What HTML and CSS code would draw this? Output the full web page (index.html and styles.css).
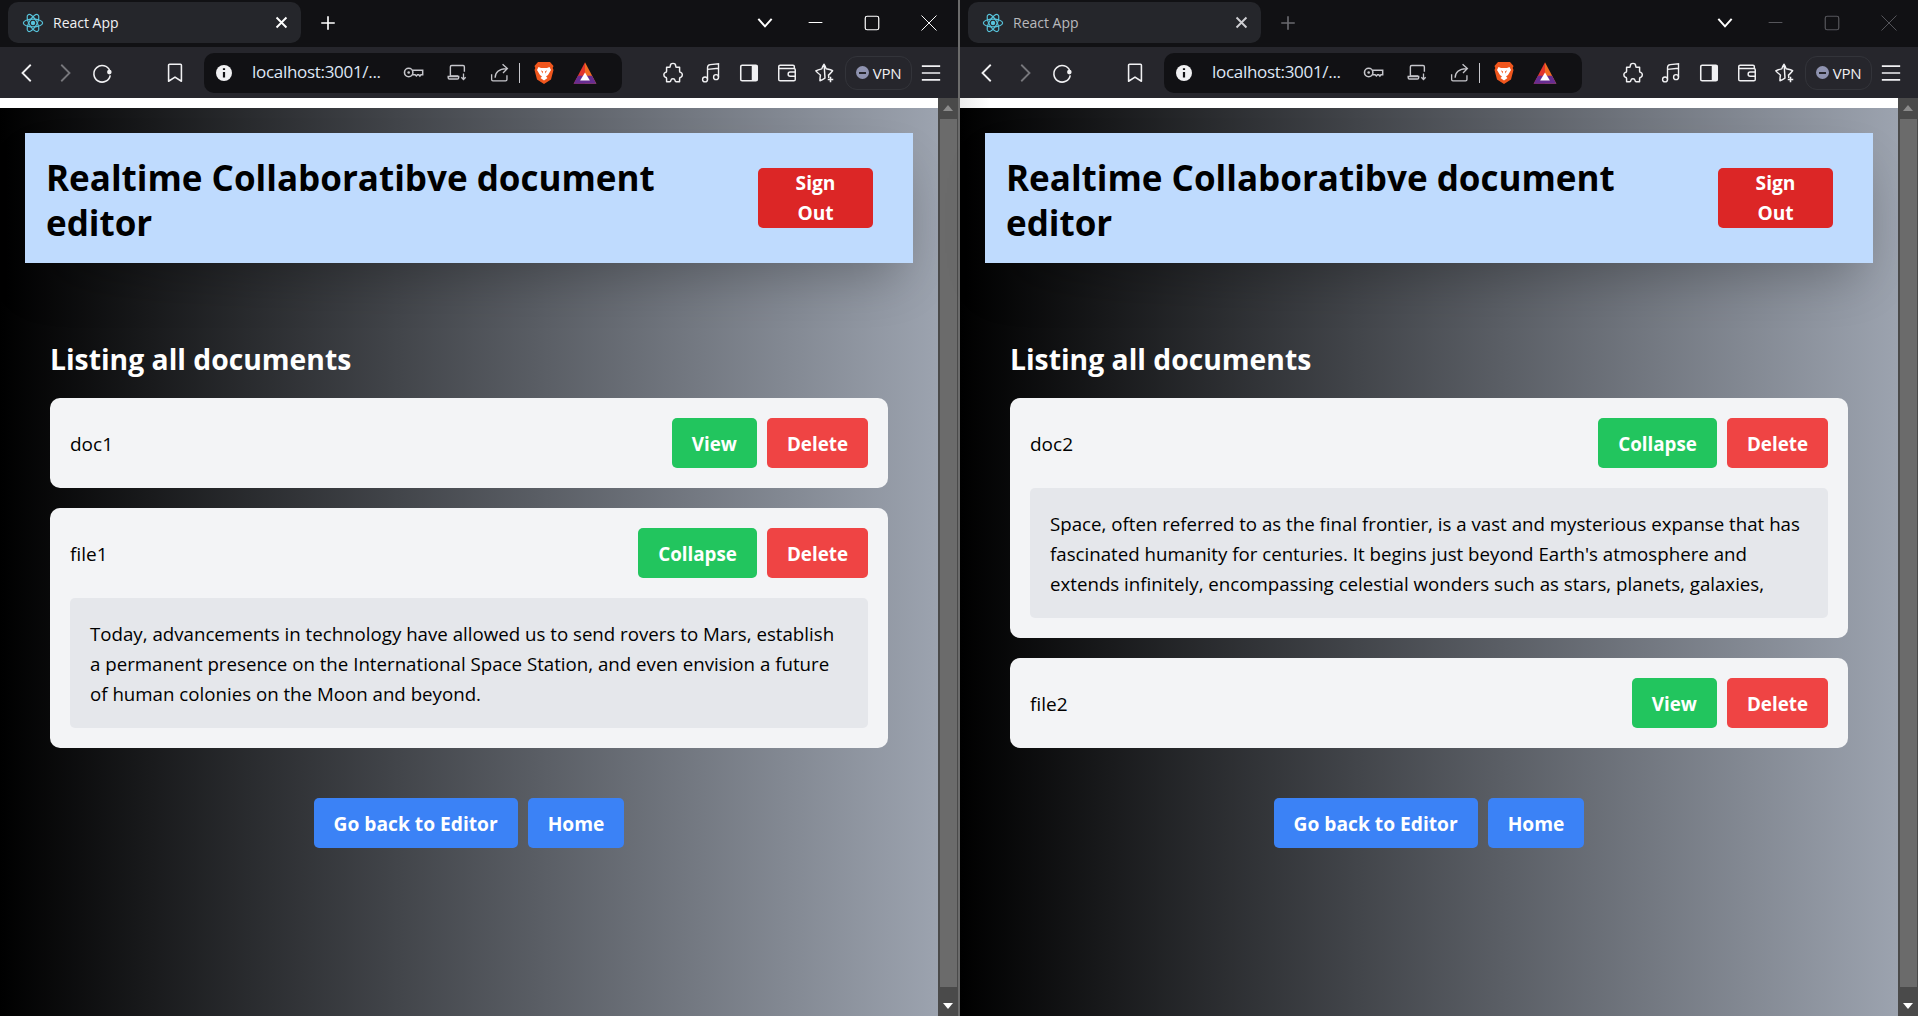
FILE: index.html
```html
<!DOCTYPE html>
<html lang="en">
<head>
  <meta charset="UTF-8" />
  <title>React App</title>
  <link rel="stylesheet" href="styles.css">
</head>
<body>
  <!-- Shared browser icons -->
  <svg class="sprite" xmlns="http://www.w3.org/2000/svg">
    <symbol id="i-react" viewBox="0 0 24 24">
      <circle cx="12" cy="12" r="2.4" fill="#58c4dc"/>
      <g fill="none" stroke="#58c4dc" stroke-width="1.3">
        <ellipse cx="12" cy="12" rx="10.5" ry="4.2"/>
        <ellipse cx="12" cy="12" rx="10.5" ry="4.2" transform="rotate(60 12 12)"/>
        <ellipse cx="12" cy="12" rx="10.5" ry="4.2" transform="rotate(120 12 12)"/>
      </g>
    </symbol>
    <symbol id="i-back" viewBox="0 0 24 24"><path d="M15 3 6 12l9 9" fill="none" stroke="currentColor" stroke-width="2"/></symbol>
    <symbol id="i-forward" viewBox="0 0 24 24"><path d="m9 3 9 9-9 9" fill="none" stroke="currentColor" stroke-width="2"/></symbol>
    <symbol id="i-reload" viewBox="0 0 24 24">
      <path d="M20.500 9.500A9 9 0 1 0 21 14.500" fill="none" stroke="currentColor" stroke-width="1.700"/>
      <circle cx="20" cy="11" r="2.500" fill="currentColor"/>
    </symbol>
    <symbol id="i-bookmark" viewBox="0 0 24 24"><path d="M6 2.500h12a1 1 0 0 1 1 1V21l-7-4.500L5 21V3.500a1 1 0 0 1 1-1z" fill="none" stroke="currentColor" stroke-width="1.700" stroke-linejoin="round"/></symbol>
    <symbol id="i-info" viewBox="0 0 24 24">
      <circle cx="12" cy="12" r="8" fill="currentColor"/>
      <path d="M12 11v5.500M12 7.200v1.800" stroke="#111114" stroke-width="2.200"/>
    </symbol>
    <symbol id="i-key" viewBox="0 0 24 24">
      <circle cx="6.500" cy="12" r="4.800" fill="none" stroke="currentColor" stroke-width="1.800"/>
      <circle cx="6.500" cy="12" r="1.500" fill="currentColor"/>
      <path d="M11 9.500h11.500v5h-2l-1.200 1.500-1.300-1.500h-1.500l-1.200 1.500-1.500-1.500H11" fill="none" stroke="currentColor" stroke-width="1.700"/>
    </symbol>
    <symbol id="i-laptop" viewBox="0 0 24 24">
      <path d="M14 16H5V5.500a1.500 1.500 0 0 1 1.500-1.500h13A1.500 1.500 0 0 1 21 5.500V11" fill="none" stroke="currentColor" stroke-width="1.600"/>
      <path d="M2.500 16.500h12v1.500a1.500 1.500 0 0 1-1.500 1.500H4a1.500 1.500 0 0 1-1.500-1.500z" fill="none" stroke="currentColor" stroke-width="1.600"/>
      <path d="M20 13v7m-2.500-2.500L20 20l2.500-2.500" fill="none" stroke="currentColor" stroke-width="1.500"/>
    </symbol>
    <symbol id="i-share" viewBox="0 0 24 24">
      <path d="M20.500 15v5a1.500 1.500 0 0 1-1.500 1.500H4.500A1.500 1.500 0 0 1 3 20v-6" fill="none" stroke="currentColor" stroke-width="1.500"/>
      <path d="M7 18c0-6 3.500-10 13-10.500M15.500 2.500l5.500 5-5 5" fill="none" stroke="currentColor" stroke-width="1.500"/>
    </symbol>
    <symbol id="i-brave" viewBox="0 0 24 24">
      <path d="M6 1.500h12l3.500 4-.8 2 .8 2-2.500 9.500L12 23.500 5 19 2.500 9.500l.8-2-.8-2z" fill="#f0561d"/>
      <path d="M6.500 6.500 9 7.500h6l2.500-1 1.500 3-3 5-2 1.500 1.500 1.500-3.500 2.500-3.500-2.500 1.500-1.500-2-1.500-3-5z" fill="#fff"/>
      <path d="M9 9.800l2 1.200-.5 2zM15 9.800l-2 1.200.5 2z" fill="#f0561d"/>
    </symbol>
    <symbol id="i-bat" viewBox="0 0 24 24">
      <path d="M12 2 1.500 22H12z" fill="#e2352d"/>
      <path d="M12 2 22.500 22H12z" fill="#f26b21"/>
      <path d="M1.500 22h21l-4-7.500h-13z" fill="#662d91"/>
      <path d="M12 11.500 7.500 19h9z" fill="#fff"/>
    </symbol>
    <symbol id="i-puzzle" viewBox="0 0 24 24"><path d="M9 4.500a3 3 0 0 1 6 0c0 1 .5 1.300 1.200 1.300h3V10c0 .8.500 1.300 1.300 1.300a3 3 0 0 1 0 5.400c-.8 0-1.300.5-1.300 1.300v3.500H15.500c-.8 0-1.200-.5-1.200-1.200a2.400 2.400 0 0 0-4.700 0c0 .7-.4 1.200-1.200 1.200H5V18c0-.8-.5-1.300-1.300-1.300a3 3 0 0 1 0-5.400c.8 0 1.300-.5 1.300-1.300V5.800h2.800C8.500 5.800 9 5.500 9 4.500z" fill="none" stroke="currentColor" stroke-width="1.600" stroke-linejoin="round"/></symbol>
    <symbol id="i-music" viewBox="0 0 24 24">
      <circle cx="5.500" cy="19" r="2.700" fill="none" stroke="currentColor" stroke-width="1.500"/>
      <circle cx="17.500" cy="16.500" r="2.700" fill="none" stroke="currentColor" stroke-width="1.500"/>
      <path d="M8.200 19V6c0-2 1-3 3-3.200l9-.8v14.500M8.200 8l12-1.200" fill="none" stroke="currentColor" stroke-width="1.500"/>
    </symbol>
    <symbol id="i-sidebar" viewBox="0 0 24 24">
      <rect x="3" y="3.500" width="18" height="17" rx="1.500" fill="none" stroke="currentColor" stroke-width="1.700"/>
      <rect x="15" y="3.500" width="6" height="17" fill="currentColor"/>
    </symbol>
    <symbol id="i-wallet" viewBox="0 0 24 24">
      <path d="M20 7V5a1.500 1.500 0 0 0-1.500-1.500h-14A1.500 1.500 0 0 0 3 5v14a1.500 1.500 0 0 0 1.500 1.500h15A1.500 1.500 0 0 0 21 19V8.500A1.500 1.500 0 0 0 19.500 7H3.500" fill="none" stroke="currentColor" stroke-width="1.600"/>
      <path d="M21 11h-5.500a2 2 0 0 0 0 4.500H21" fill="none" stroke="currentColor" stroke-width="1.600"/>
    </symbol>
    <symbol id="i-spark" viewBox="0 0 24 24">
      <path d="M11 2.500c1 1.500 1.800 3.300 2.300 5 1.800.4 5 .9 7 2-1.500 2-3 3.500-4.500 4.800.3 1.200.3 2 .2 3.200M12 17.500c-1.700 1.200-3.500 2.200-5.500 3 0-2.400.2-4.500.5-6.300C5.300 13 3.500 11.500 2 9.700c2-1.100 4.300-1.700 6.500-2.200.6-1.800 1.400-3.500 2.500-5z" fill="none" stroke="currentColor" stroke-width="1.600" stroke-linejoin="round"/>
      <path d="M18 16v6m-3-3h6" stroke="currentColor" stroke-width="1.700"/>
    </symbol>
    <symbol id="i-menu" viewBox="0 0 24 24"><path d="M2 4.500h20M2 12h20M2 19.500h20" stroke="currentColor" stroke-width="1.700"/></symbol>
    <symbol id="i-close" viewBox="0 0 24 24"><path d="m5 5 14 14M19 5 5 19" stroke="currentColor" stroke-width="2.700"/></symbol>
    <symbol id="i-plus" viewBox="0 0 24 24"><path d="M12 3v18M3 12h18" stroke="currentColor" stroke-width="2.200"/></symbol>
    <symbol id="i-chevron" viewBox="0 0 24 24"><path d="m4 7 8 9 8-9" fill="none" stroke="currentColor" stroke-width="2.400"/></symbol>
    <symbol id="i-min" viewBox="0 0 24 24"><path d="M1 12h22" stroke="currentColor" stroke-width="1.600"/></symbol>
    <symbol id="i-max" viewBox="0 0 24 24"><rect x="3" y="3" width="18" height="18" rx="2.500" fill="none" stroke="currentColor" stroke-width="1.600"/></symbol>
    <symbol id="i-x" viewBox="0 0 24 24"><path d="m2 2 20 20M22 2 2 22" stroke="currentColor" stroke-width="1.300"/></symbol>
  </svg>

  <div class="desktop">
    <!-- Left browser window -->
    <div class="window">
      <div class="tabstrip">
        <div class="tab">
          <svg class="tab-icon"><use href="#i-react"/></svg>
          <span class="tab-title">React App</span>
          <svg class="tab-close"><use href="#i-close"/></svg>
        </div>
        <svg class="new-tab"><use href="#i-plus"/></svg>
        <svg class="tab-list"><use href="#i-chevron"/></svg>
        <svg class="win-min"><use href="#i-min"/></svg>
        <svg class="win-max"><use href="#i-max"/></svg>
        <svg class="win-x"><use href="#i-x"/></svg>
      </div>
      <div class="toolbar">
        <svg class="tool nav-back"><use href="#i-back"/></svg>
        <svg class="tool nav-forward"><use href="#i-forward"/></svg>
        <svg class="tool nav-reload"><use href="#i-reload"/></svg>
        <svg class="tool nav-mark"><use href="#i-bookmark"/></svg>
        <div class="urlbar">
          <svg class="url-info"><use href="#i-info"/></svg>
          <span class="url-text">localhost:3001/...</span>
          <svg class="url-icon"><use href="#i-key"/></svg>
          <svg class="url-icon"><use href="#i-laptop"/></svg>
          <svg class="url-icon"><use href="#i-share"/></svg>
          <span class="url-sep"></span>
          <svg class="url-brave"><use href="#i-brave"/></svg>
          <svg class="url-bat"><use href="#i-bat"/></svg>
        </div>
        <div class="tool-right">
          <svg class="tool"><use href="#i-puzzle"/></svg>
          <svg class="tool"><use href="#i-music"/></svg>
          <svg class="tool"><use href="#i-sidebar"/></svg>
          <svg class="tool"><use href="#i-wallet"/></svg>
          <svg class="tool"><use href="#i-spark"/></svg>
          <div class="vpn"><span class="vpn-dot"></span>VPN</div>
          <svg class="tool"><use href="#i-menu"/></svg>
        </div>
      </div>
      <div class="viewport">
        <div class="page">
          <div class="app">
            <header class="site-header">
              <h1>Realtime Collaboratibve document editor</h1>
              <button class="btn btn-signout">Sign Out</button>
            </header>
            <main class="docs">
              <h2>Listing all documents</h2>
              <div class="doc-card">
                <div class="doc-row">
                  <span class="doc-name">doc1</span>
                  <div class="doc-actions">
                    <button class="btn btn-green">View</button>
                    <button class="btn btn-red">Delete</button>
                  </div>
                </div>
              </div>
              <div class="doc-card">
                <div class="doc-row">
                  <span class="doc-name">file1</span>
                  <div class="doc-actions">
                    <button class="btn btn-green">Collapse</button>
                    <button class="btn btn-red">Delete</button>
                  </div>
                </div>
                <div class="doc-body">Today, advancements in technology have allowed us to send rovers to Mars, establish a permanent presence on the International Space Station, and even envision a future of human colonies on the Moon and beyond.</div>
              </div>
              <div class="bottom-links">
                <button class="btn btn-blue">Go back to Editor</button>
                <button class="btn btn-blue">Home</button>
              </div>
            </main>
          </div>
        </div>
        <div class="scrollbar">
          <div class="arrow-up"></div>
          <div class="thumb"></div>
          <div class="arrow-down"></div>
        </div>
      </div>
    </div>

    <!-- Right browser window (not focused) -->
    <div class="window window-blur">
      <div class="tabstrip">
        <div class="tab">
          <svg class="tab-icon"><use href="#i-react"/></svg>
          <span class="tab-title">React App</span>
          <svg class="tab-close"><use href="#i-close"/></svg>
        </div>
        <svg class="new-tab"><use href="#i-plus"/></svg>
        <svg class="tab-list"><use href="#i-chevron"/></svg>
        <svg class="win-min"><use href="#i-min"/></svg>
        <svg class="win-max"><use href="#i-max"/></svg>
        <svg class="win-x"><use href="#i-x"/></svg>
      </div>
      <div class="toolbar">
        <svg class="tool nav-back"><use href="#i-back"/></svg>
        <svg class="tool nav-forward"><use href="#i-forward"/></svg>
        <svg class="tool nav-reload"><use href="#i-reload"/></svg>
        <svg class="tool nav-mark"><use href="#i-bookmark"/></svg>
        <div class="urlbar">
          <svg class="url-info"><use href="#i-info"/></svg>
          <span class="url-text">localhost:3001/...</span>
          <svg class="url-icon"><use href="#i-key"/></svg>
          <svg class="url-icon"><use href="#i-laptop"/></svg>
          <svg class="url-icon"><use href="#i-share"/></svg>
          <span class="url-sep"></span>
          <svg class="url-brave"><use href="#i-brave"/></svg>
          <svg class="url-bat"><use href="#i-bat"/></svg>
        </div>
        <div class="tool-right">
          <svg class="tool"><use href="#i-puzzle"/></svg>
          <svg class="tool"><use href="#i-music"/></svg>
          <svg class="tool"><use href="#i-sidebar"/></svg>
          <svg class="tool"><use href="#i-wallet"/></svg>
          <svg class="tool"><use href="#i-spark"/></svg>
          <div class="vpn"><span class="vpn-dot"></span>VPN</div>
          <svg class="tool"><use href="#i-menu"/></svg>
        </div>
      </div>
      <div class="viewport">
        <div class="page">
          <div class="app">
            <header class="site-header">
              <h1>Realtime Collaboratibve document editor</h1>
              <button class="btn btn-signout">Sign Out</button>
            </header>
            <main class="docs">
              <h2>Listing all documents</h2>
              <div class="doc-card">
                <div class="doc-row">
                  <span class="doc-name">doc2</span>
                  <div class="doc-actions">
                    <button class="btn btn-green">Collapse</button>
                    <button class="btn btn-red">Delete</button>
                  </div>
                </div>
                <div class="doc-body">Space, often referred to as the final frontier, is a vast and mysterious expanse that has fascinated humanity for centuries. It begins just beyond Earth's atmosphere and extends infinitely, encompassing celestial wonders such as stars, planets, galaxies,</div>
              </div>
              <div class="doc-card">
                <div class="doc-row">
                  <span class="doc-name">file2</span>
                  <div class="doc-actions">
                    <button class="btn btn-green">View</button>
                    <button class="btn btn-red">Delete</button>
                  </div>
                </div>
              </div>
              <div class="bottom-links">
                <button class="btn btn-blue">Go back to Editor</button>
                <button class="btn btn-blue">Home</button>
              </div>
            </main>
          </div>
        </div>
        <div class="scrollbar">
          <div class="arrow-up"></div>
          <div class="thumb"></div>
          <div class="arrow-down"></div>
        </div>
      </div>
    </div>
  </div>
</body>
</html>
```

FILE: styles.css
```css
/* Global */
* {
  box-sizing: border-box;
}

html, body {
  margin: 0;
  height: 100%;
  overflow: hidden;
}

body {
  font-family: 'Open Sans', 'Noto Sans', sans-serif;
  background: #000;
}

.sprite {
  display: none;
}

.desktop {
  display: flex;
  gap: 2px;
  height: 1016px;
  background: #6b6b6b;
}

.window {
  width: 958px;
  display: flex;
  flex-direction: column;
  flex: none;
}

/* Tab strip */
.tabstrip {
  height: 47px;
  background: #111114;
  display: flex;
  align-items: center;
  color: #fff;
  padding: 2px 0 4px 8px;
}

.tab {
  width: 293px;
  height: 41px;
  background: #25262b;
  border-radius: 10px;
  display: flex;
  align-items: center;
  padding: 0 11px 0 14px;
  gap: 9px;
}

.tab-icon {
  width: 22px;
  height: 22px;
}

.tab-title {
  font-size: 14px;
  color: #f1f1f3;
  flex: 1;
}

.tab-close {
  width: 17px;
  height: 17px;
}

.new-tab {
  width: 18px;
  height: 18px;
  margin-left: 18px;
}

.tab-list {
  width: 20px;
  height: 20px;
  margin-left: 418px;
}

.win-min {
  width: 15px;
  height: 15px;
  margin-left: 33px;
}

.win-max {
  width: 18px;
  height: 18px;
  margin-left: 40px;
}

.win-x {
  width: 18px;
  height: 18px;
  margin-left: 39px;
}

/* Toolbar */
.toolbar {
  height: 51px;
  background: #26262c;
  display: flex;
  align-items: center;
  color: #f1f1f3;
  padding-left: 17px;
}

.tool {
  width: 22px;
  height: 22px;
  flex: none;
}

.nav-back {
  margin-right: 14px;
}

.nav-forward {
  margin-right: 16px;
  color: #77777c;
}

.nav-mark {
  margin-left: 51px;
}

.urlbar {
  width: 418px;
  height: 40px;
  margin-left: 18px;
  background: #111114;
  border-radius: 10px;
  display: flex;
  align-items: center;
  padding-left: 8px;
}

.url-info {
  width: 24px;
  height: 24px;
}

.url-text {
  width: 151px;
  margin-left: 16px;
  padding-bottom: 2px;
  font-size: 17px;
  letter-spacing: -0.3px;
  color: #dfe7f5;
  white-space: nowrap;
}

.url-icon {
  width: 21px;
  height: 21px;
  margin-right: 22px;
  color: #c6c6cb;
}

.url-sep {
  width: 1px;
  height: 20px;
  background: #c6c6cb;
  margin-left: -13px;
  margin-right: 12px;
}

.url-brave {
  width: 24px;
  height: 25px;
  margin-right: 16px;
}

.url-bat {
  width: 26px;
  height: 26px;
}

.tool-right {
  display: flex;
  align-items: center;
  gap: 16px;
  margin-left: 40px;
}

.vpn {
  width: 67px;
  height: 34px;
  margin: 0 -8px 0 -7px;
  border: 1px solid #33343a;
  border-radius: 12px;
  display: flex;
  align-items: center;
  justify-content: center;
  gap: 4px;
  font-size: 15px;
  letter-spacing: -0.3px;
  color: #f1f1f3;
}

.vpn-dot {
  width: 13px;
  height: 13px;
  border-radius: 50%;
  background: #8f93b0;
  position: relative;
}

.vpn-dot::after {
  content: "";
  position: absolute;
  left: 3px;
  right: 3px;
  top: 5.5px;
  height: 2px;
  background: #26262c;
}

/* Unfocused window */
.window-blur .tab-title {
  color: #b9b9bd;
}

.window-blur .tab-close {
  color: #cfcfd3;
}

.window-blur .new-tab {
  color: #6a6a6f;
}

.window-blur .win-min,
.window-blur .win-max,
.window-blur .win-x {
  color: #56565b;
}

.window-blur .page {
  background: linear-gradient(to right, #ececec, #fff 30px);
}

/* Viewport */
.viewport {
  flex: 1;
  display: flex;
  min-height: 0;
}

.page {
  width: 938px;
  padding-top: 10px;
  background: #fff;
}

.app {
  height: 100%;
  background-image: linear-gradient(to right, #000, #9ca3af);
  padding: 25px;
}

/* Scrollbar */
.scrollbar {
  width: 20px;
  background: #4a4a4a;
  display: flex;
  flex-direction: column;
  align-items: center;
}

.arrow-up {
  height: 21px;
  width: 100%;
  position: relative;
}

.arrow-up::after {
  content: "";
  position: absolute;
  left: 5px;
  top: 7px;
  border-left: 5px solid transparent;
  border-right: 5px solid transparent;
  border-bottom: 6px solid #8b8b8b;
}

.thumb {
  flex: 1;
  width: 17px;
  background: #6b6b6b;
}

.arrow-down {
  height: 29px;
  width: 100%;
  position: relative;
}

.arrow-down::after {
  content: "";
  position: absolute;
  left: 5px;
  top: 16px;
  border-left: 5px solid transparent;
  border-right: 5px solid transparent;
  border-top: 6px solid #fff;
}

/* Header */
.site-header {
  display: flex;
  align-items: center;
  justify-content: space-between;
  background: #bfdbfe;
  padding: 20px 40px 20px 21px;
  box-shadow: 0 25px 50px -12px rgba(0, 0, 0, 0.25);
}

h1 {
  margin: 0 0 -2px;
  padding-top: 2px;
  max-width: 640px;
  font-size: 35px;
  line-height: 45px;
  font-weight: 700;
  color: #000;
}

/* Buttons */
.btn {
  font-family: inherit;
  font-size: 19.2px;
  line-height: 30px;
  font-weight: 700;
  color: #fff;
  border: none;
  border-radius: 5px;
  padding: 11px 20px 9px;
}

.btn-signout {
  width: 115px;
  height: 60px;
  padding: 0 24px;
  background: #dc2626;
}

.btn-green {
  background: #22c55e;
}

.btn-red {
  background: #ef4444;
}

.btn-blue {
  background: #3b82f6;
}

/* Document list */
.docs {
  padding: 75px 25px 0;
}

h2 {
  margin: 0 0 19px;
  padding-top: 1px;
  font-size: 28.3px;
  line-height: 40px;
  font-weight: 700;
  color: #fff;
}

.doc-card {
  background: #f3f4f6;
  border-radius: 10px;
  padding: 20px;
  margin-bottom: 20px;
}

.doc-row {
  display: flex;
  align-items: center;
  justify-content: space-between;
}

.doc-name {
  padding-top: 2px;
  font-size: 19px;
  color: #000;
}

.doc-actions {
  display: flex;
  gap: 10px;
}

.doc-actions .btn {
  font-size: 18.8px;
}

.doc-body {
  margin-top: 20px;
  background: #e5e7eb;
  border-radius: 5px;
  padding: 21px 20px 19px;
  font-size: 18.7px;
  line-height: 30px;
  color: #000;
}

.bottom-links {
  display: flex;
  justify-content: center;
  gap: 10px;
  margin-top: 50px;
}
```
